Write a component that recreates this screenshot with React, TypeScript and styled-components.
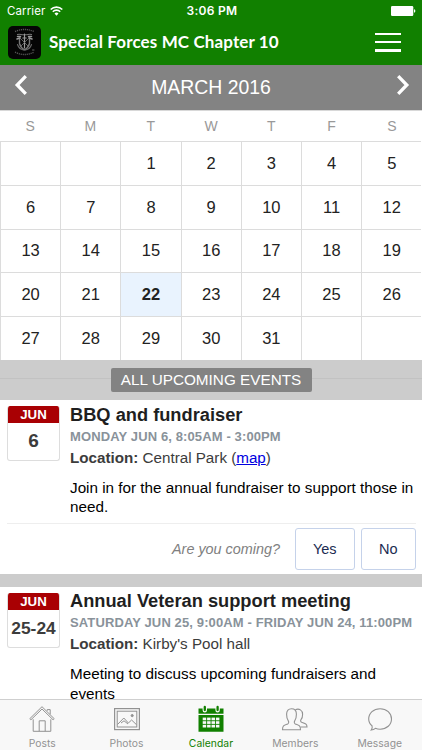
import React from "react";
import styled, { createGlobalStyle } from "styled-components";

const Global = createGlobalStyle`
  * { box-sizing: border-box; }
  html, body { margin: 0; padding: 0; }
  body { background: #fff; font-family: "Liberation Sans", Arial, sans-serif; color: #222; }
`;

const Screen = styled.div`
  width: 422px;
  height: 750px;
  overflow: hidden;
  display: flex;
  flex-direction: column;
  background: #ccc;
`;

const Header = styled.header`
  flex: none;
  height: 65px;
  background: #118000;
  color: #fff;
`;

const StatusBar = styled.div`
  height: 22px;
  display: grid;
  grid-template-columns: 1fr auto 1fr;
  align-items: center;
  padding: 0 6px 0 7px;
  font: 400 11.5px/22px Inter, sans-serif;
  letter-spacing: 0.1px;
`;

const Carrier = styled.span`
  display: flex;
  align-items: center;
  gap: 5px;
  svg { margin-top: -1px; }
`;

const Clock = styled.span`
  padding-left: 1px;
  font-weight: 600;
  font-size: 12px;
  letter-spacing: 0.3px;
`;

const Battery = styled.span`
  justify-self: end;
  display: flex;
`;

const TitleBar = styled.div`
  height: 40px;
  display: flex;
  align-items: center;
  padding: 0 21px 0 8px;
`;

const Logo = styled.span`
  width: 33px;
  height: 33px;
  border-radius: 5px;
  background: #050505;
  display: flex;
  align-items: center;
  justify-content: center;
`;

const Title = styled.h1`
  margin: 0 0 0 8px;
  flex: 1;
  font: 700 17px/24px Lato, sans-serif;
  letter-spacing: 0.12px;
  white-space: nowrap;
`;

const MenuButton = styled.button`
  border: 0;
  padding: 0;
  background: none;
  width: 26px;
  height: 19px;
  display: flex;
  flex-direction: column;
  justify-content: space-between;
`;

const MenuLine = styled.span`
  width: 26px;
  height: 2.5px;
  background: #fff;
`;

const MonthBar = styled.div`
  flex: none;
  height: 45px;
  display: flex;
  align-items: center;
  justify-content: space-between;
  padding: 0 12px 0 14px;
  background: #838383;
  color: #fff;
  font-size: 19.4px;
  svg { margin-top: -5px; }
  span { margin-left: -2px; }
`;

const Weekdays = styled.div`
  flex: none;
  height: 31px;
  display: grid;
  grid-template-columns: repeat(7, 1fr);
  border-top: 1px solid #d8d8d8;
  background: #fff;
  color: #999;
  font-size: 14px;
  line-height: 30px;
  text-align: center;
`;

const Days = styled.div`
  flex: none;
  height: 219px;
  display: grid;
  grid-template-columns: repeat(7, 60.2px);
  grid-template-rows: repeat(5, 43.8px);
  background: #fff;
  overflow: hidden;
`;

const Day = styled.span<{ $today?: boolean }>`
  border-top: 1px solid #dcdcdc;
  border-left: 1px solid #dcdcdc;
  display: flex;
  align-items: center;
  justify-content: center;
  font-size: 16.5px;
  font-weight: ${(p) => (p.$today ? 700 : 400)};
  background: ${(p) => (p.$today ? "#e9f3fe" : "#fff")};
`;

const Upcoming = styled.div`
  flex: none;
  height: 40px;
  display: flex;
  align-items: center;
  background: #ccc;
  &::before, &::after { content: ""; flex: 1; height: 1px; margin-top: -3px; background: #c2c2c2; }
`;

const UpcomingLabel = styled.span`
  width: 201px;
  height: 24px;
  border-radius: 2px;
  background: #838383;
  color: #fff;
  font-size: 15.3px;
  line-height: 24px;
  text-align: center;
  white-space: nowrap;
`;

const Feed = styled.main`
  flex: 1;
  min-height: 0;
  overflow: hidden;
  display: flex;
  flex-direction: column;
  gap: 12.5px;
`;

const Card = styled.article`
  flex: none;
  background: #fff;
`;

const CardBody = styled.div`
  display: flex;
  gap: 10px;
  padding: 6px 0 0 7px;
  height: 123px;
`;

const DateBox = styled.div`
  flex: none;
  width: 53px;
  height: 55px;
  border: 1px solid #ddd;
  border-top: 0;
  border-radius: 3px;
  overflow: hidden;
  text-align: center;
  font-weight: 700;
`;

const DateMonth = styled.div`
  height: 17px;
  margin: 0 -1px;
  background: #a90003;
  color: #fff;
  font-size: 13.3px;
  line-height: 18px;
`;

const DateDay = styled.div<{ $range?: boolean }>`
  font-size: ${(p) => (p.$range ? "17.4px" : "19px")};
  line-height: 36px;
  color: #3c3c3c;
  white-space: nowrap;
`;

const Info = styled.div`
  white-space: nowrap;
`;

const EventName = styled.h2`
  margin: -2.5px 0 0;
  font-size: 18.25px;
  line-height: 22px;
  color: #1f1f1f;
`;

const When = styled.div`
  margin-top: 1px;
  font-size: 13px;
  font-weight: 700;
  line-height: 20px;
  letter-spacing: 0.12px;
  color: #89929a;
`;

const Where = styled.div`
  font-size: 15.2px;
  line-height: 22px;
  color: #3c3c3c;
  a { color: #0000e0; }
`;

const About = styled.p`
  margin: 9px 0 0;
  font-size: 15.25px;
  line-height: 19.5px;
  color: #000;
`;

const Rsvp = styled.div`
  height: 51px;
  margin: 0 6.5px 0 7px;
  border-top: 1px solid #eee;
  display: flex;
  align-items: flex-start;
  justify-content: flex-end;
  padding-top: 4px;
`;

const Question = styled.em`
  margin-right: 15px;
  font-size: 14.4px;
  line-height: 42px;
  color: #808080;
`;

const Answer = styled.button<{ $width: number }>`
  width: ${(p) => p.$width}px;
  height: 42px;
  margin: 0;
  padding: 0;
  border: 1px solid #c5d2ea;
  border-radius: 3px;
  background: #fff;
  color: #1b2c52;
  font: 400 14.5px "Liberation Sans", sans-serif;
  & + & { margin-left: 6.5px; }
`;

const TabBar = styled.nav`
  flex: none;
  height: 51px;
  border-top: 1px solid #cfcfcf;
  background: #f8f8f8;
  display: grid;
  grid-template-columns: repeat(5, 84.4px);
`;

const Tab = styled.a<{ $active?: boolean }>`
  display: flex;
  flex-direction: column;
  align-items: center;
  padding-top: 5px;
  color: ${(p) => (p.$active ? "#118000" : "#929292")};
  font: 400 10.3px/13px Inter, sans-serif;
  letter-spacing: 0.05px;
  svg { margin-bottom: 4px; }
`;

const WifiIcon = () => (
  <svg width="13" height="10" viewBox="0 0 13 10" fill="none" stroke="#fff" strokeWidth="1.6">
    <path d="M.7 3.5a8.2 8.2 0 0 1 11.6 0M2.8 5.7a5.2 5.2 0 0 1 7.4 0" />
    <path d="M6.5 9.7 4.5 7.5a2.9 2.9 0 0 1 4 0z" fill="#fff" stroke="none" />
  </svg>
);

const BatteryIcon = () => (
  <svg width="25" height="10" viewBox="0 0 25 10" fill="#fff">
    <rect width="22.3" height="10" rx="1.3" />
    <path d="M23 3.3c1.8.3 1.8 3.1 0 3.4z" />
  </svg>
);

const CrestIcon = () => (
  <svg width="33" height="33" viewBox="0 0 33 33" fill="none" stroke="#999" strokeLinecap="round">
    <path d="M7 5.5q9.5-4 19 0M7 26.2q9.5 4.6 19 0" stroke="#555" strokeWidth="1.4" strokeLinecap="butt" strokeDasharray="1.2 .8" />
    <path d="M9.5 8.5c3-1 4 1 7 0 3 1 4-1 7 0" stroke="#777" strokeWidth="1.2" />
    <path d="M9.5 10.5h3M20.5 10.5h3M9 13l3-1M24 13l-3-1" strokeWidth="1.5" />
    <path d="M16.5 8v14M14.8 12h3.4" strokeWidth="1.2" />
    <path d="M11.5 13.5v4q1 4 5 6.5 4-2.5 5-6.5v-4" stroke="#777" strokeWidth="1.4" />
    <path d="m12 12 8.5 8.5M21 12l-8.5 8.5" stroke="#777" strokeWidth=".8" />
    <path d="M9.5 18.5q1.500 4.500 6 5.500M23.500 18.500q-1.500 4.500-6 5.500" stroke="#666" strokeWidth="1.2" />
    <path d="M24.5 24h1.5" stroke="#666" />
  </svg>
);

const Chevron = ({ right = false }: { right?: boolean }) => (
  <svg width="14" height="22" viewBox="0 0 14 22" fill="none" stroke="#fff" strokeWidth="3.3">
    <path d={right ? "M2.2 2.2 10.8 11 2.2 19.8" : "M11.8 2.2 3.2 11l8.6 8.8"} />
  </svg>
);

const PostsIcon = () => (
  <svg width="28" height="28" viewBox="0 0 28 28" fill="none" stroke="#929292">
    <path d="M5.2 14.3v12h17.6v-12M11.2 26.3V15.8h6v10.5M1.8 13.700 14 1.700l12.200 12-1.100 1.100L14 4 2.900 14.800zM19.200 5.800V4.600h3v4.700" />
  </svg>
);

const PhotosIcon = () => (
  <svg width="28" height="28" viewBox="0 0 28 28" fill="none" stroke="#929292">
    <rect x="1.6" y="3.6" width="24.8" height="21" strokeWidth="1.2" />
    <rect x="4.2" y="6.2" width="19.6" height="15.8" />
    <path d="m4.5 19.5 6.3-6.5 4.6 5 3.2-3 5 4.8M8 18l3-2.2 4 3.2" />
    <circle cx="19.2" cy="10.6" r="1.1" fill="#929292" />
  </svg>
);

const CalendarIcon = () => (
  <svg width="28" height="28" viewBox="0 0 28 28">
    <path fill="#118000" d="M1.5 3.5h25v5.300h-25zM1.500 10h25v16.700h-25z" />
    <path d="M7.8 2.8v2.5M20.6 2.8v2.5" stroke="#f8f8f8" strokeWidth="4.4" strokeLinecap="round" />
    <path d="M7.8 2v3M20.6 2v3" stroke="#118000" strokeWidth="2.3" strokeLinecap="round" />
    <g fill="#f8f8f8">
      {[12.6, 16.2, 19.8].map((y) =>
        [5.7, 10.1, 14.5, 18.9].map((x) => <rect key={`${x}-${y}`} x={x} y={y} width="3.5" height="2.7" />)
      )}
    </g>
  </svg>
);

const MembersIcon = () => (
  <svg width="28" height="28" viewBox="0 0 28 28" fill="none" stroke="#929292" strokeWidth="1.1">
    <path d="M1.5 24.800c0-4.300 1.600-4.500 5.200-5.900 1.200-.6 1.200-2 .6-3-1.300-1.600-1.700-3.500-1.700-6.700 0-3.500 1.900-5.400 4.900-5.400s4.900 1.900 4.900 5.400c0 3.200-.4 5.100-1.700 6.700-.6 1-.6 2.400.6 3 3.600 1.400 5.200 1.600 5.200 5.900z" />
    <path d="M14.3 4.7c3.900-1.500 7.300.4 7.300 4.700 0 2.400-.5 4-1.600 5.200-.7 1-.4 2.200.7 2.700 3.500 1.300 5.300 1.500 5.300 4.700h-6.500" />
  </svg>
);

const MessageIcon = () => (
  <svg width="28" height="28" viewBox="0 0 28 28" fill="none" stroke="#929292" strokeWidth="1.1">
    <path d="M6 20.8C3.800 19 2.700 16.700 2.700 14c0-5.800 4.900-10.300 11.400-10.300S25.500 8.200 25.500 14 20.600 24.200 14.100 24.200c-1.800 0-3.300-.3-4.700-.9-1.200 1-2.300 1.500-4.200 1.700 1-1.300 1.400-2.600.8-4.200z" />
  </svg>
);

const days = ["", "", ...Array.from({ length: 31 }, (_, i) => String(i + 1)), "", ""];

const tabs = [
  { name: "Posts", Icon: PostsIcon },
  { name: "Photos", Icon: PhotosIcon },
  { name: "Calendar", Icon: CalendarIcon },
  { name: "Members", Icon: MembersIcon },
  { name: "Message", Icon: MessageIcon },
];

export default function App() {
  return (
    <>
      <Global />
      <Screen>
        <Header>
          <StatusBar>
            <Carrier>Carrier <WifiIcon /></Carrier>
            <Clock>3:06 PM</Clock>
            <Battery><BatteryIcon /></Battery>
          </StatusBar>
          <TitleBar>
            <Logo><CrestIcon /></Logo>
            <Title>Special Forces MC Chapter 10</Title>
            <MenuButton aria-label="Menu"><MenuLine /><MenuLine /><MenuLine /></MenuButton>
          </TitleBar>
        </Header>
        <MonthBar>
          <Chevron />
          <span>MARCH 2016</span>
          <Chevron right />
        </MonthBar>
        <Weekdays>
          {["S", "M", "T", "W", "T", "F", "S"].map((d, i) => <span key={i}>{d}</span>)}
        </Weekdays>
        <Days>
          {days.map((d, i) => <Day key={i} $today={d === "22"}>{d}</Day>)}
        </Days>
        <Upcoming><UpcomingLabel>ALL UPCOMING EVENTS</UpcomingLabel></Upcoming>
        <Feed>
          <Card>
            <CardBody>
              <DateBox><DateMonth>JUN</DateMonth><DateDay>6</DateDay></DateBox>
              <Info>
                <EventName>BBQ and fundraiser</EventName>
                <When>MONDAY JUN 6, 8:05AM - 3:00PM</When>
                <Where><b>Location:</b> Central Park (<a href="#map">map</a>)</Where>
                <About>Join in for the annual fundraiser to support those in<br />need.</About>
              </Info>
            </CardBody>
            <Rsvp>
              <Question>Are you coming?</Question>
              <Answer $width={59.5}>Yes</Answer>
              <Answer $width={54.5}>No</Answer>
            </Rsvp>
          </Card>
          <Card>
            <CardBody>
              <DateBox><DateMonth>JUN</DateMonth><DateDay $range>25-24</DateDay></DateBox>
              <Info>
                <EventName>Annual Veteran support meeting</EventName>
                <When>SATURDAY JUN 25, 9:00AM - FRIDAY JUN 24, 11:00PM</When>
                <Where><b>Location:</b> Kirby's Pool hall</Where>
                <About>Meeting to discuss upcoming fundraisers and<br />events</About>
              </Info>
            </CardBody>
          </Card>
        </Feed>
        <TabBar>
          {tabs.map(({ name, Icon }) => (
            <Tab key={name} $active={name === "Calendar"}><Icon />{name}</Tab>
          ))}
        </TabBar>
      </Screen>
    </>
  );
}
